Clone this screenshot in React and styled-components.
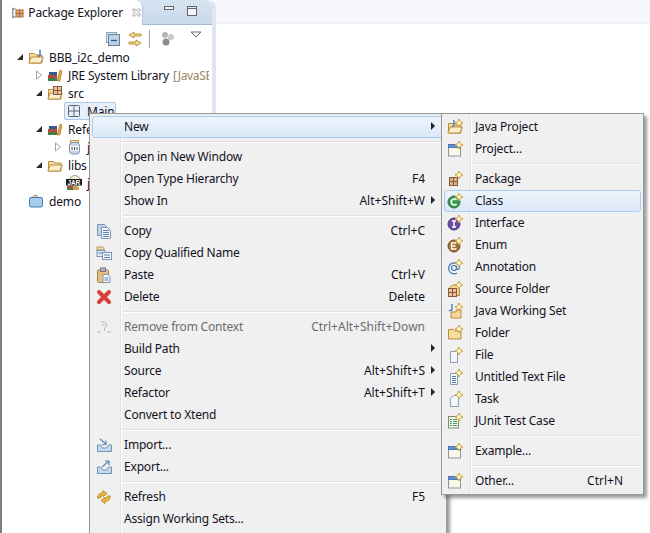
import React from 'react';
import styled, { createGlobalStyle } from 'styled-components';

const Global = createGlobalStyle`
  html, body { margin: 0; padding: 0; background: #fff; }
  body { width: 650px; height: 533px; overflow: hidden; font-family: "Noto Sans", "Liberation Sans", sans-serif; font-size: 12px; color: #12121e; }
  #root { width: 650px; height: 533px; }
  * { box-sizing: border-box; }
`;

const Page = styled.div`
  position: relative; width: 650px; height: 533px; display: flex; background: #fff; overflow: hidden;
`;
const LeftPane = styled.div`
  width: 216px; height: 533px; border-left: 2px solid #7e7e7e; border-right: 4px solid #dfe5f4; display: flex; flex-direction: column; border-top-right-radius: 7px; flex: none;
`;
const RightStrip = styled.div`
  flex: 1; height: 24px; background: #f6f7fb; border-bottom: 1px solid #eef0f5;
`;
const TabBar = styled.div`
  height: 25px; background: linear-gradient(#d6e3f1, #c9daec); display: flex; border-bottom: 1px solid #a7b8d2; border-top-right-radius: 6px; flex: none;
`;
const Tab = styled.div`
  width: 141px; height: 25px; background: #fff; border-right: 1px solid #b7c4d8; border-top-right-radius: 7px; display: flex; align-items: center; padding: 0 0 0 10px; gap: 4px; white-space: nowrap; letter-spacing: -.17px; flex: none;
`;
const TabClose = styled.span` margin-left: 4px; display: flex; `;
const TabTools = styled.div` display: flex; gap: 13px; padding: 6px 0 0 21px; align-items: flex-start; `;
const ViewBar = styled.div`
  height: 23px; display: flex; align-items: center; padding: 4px 0 0 104px; flex: none;
`;
const ToolSlot = styled.span` display: flex; margin-right: ${p => p.$mr}px; margin-top: ${p => p.$mt || 0}px; `;
const Divider = styled.div` width: 1px; height: 18px; background: #9ba3ad; margin-right: 10px; `;
const Tree = styled.div` display: flex; flex-direction: column; margin-right: 3px; overflow: hidden; `;
const Row = styled.div`
  height: 18px; display: flex; align-items: center; padding: 0 0 0 ${p => p.$indent}px; white-space: nowrap; letter-spacing: -.15px; flex: none;
`;
const Twist = styled.span` width: 10px; height: 10px; display: flex; flex: none; margin-right: 3px; `;
const RowIcon = styled.span` width: 16px; height: 16px; display: flex; flex: none; margin-right: 5px; `;
const Muted = styled.span` color: #9a8560; margin-left: 4px; letter-spacing: -.35px; `;
const Selected = styled.span`
  display: inline-flex; align-items: center; height: 18px; width: 52px; margin-left: -2px; padding-left: 1px; background: #e6effb; border: 1px solid #a9c8ea; border-radius: 2px;
`;

const Menu = styled.div`
  position: absolute; background: #f0f0f0; border: 1px solid #979797; box-shadow: 3px 3px 3px rgba(90,90,90,.6); display: flex; flex-direction: column; padding: 2px;
`;
const MainMenu = styled(Menu)` left: 89px; top: 113px; width: 358px; height: 440px; `;
const SubMenu = styled(Menu)` left: 441px; top: 113px; width: 203px; height: 382px; `;
const Gutter = styled.div`
  position: absolute; top: 2px; bottom: 2px; width: 2px; background: #e3e3e3; border-right: 1px solid #fff; left: ${p => p.$left}px;
`;
const Item = styled.div`
  position: relative; height: 22px; display: flex; align-items: center; padding: 0 ${p => p.$right}px 2px ${p => p.$pad}px; flex: none; white-space: nowrap;
  color: ${p => (p.$off ? '#6d6d6d' : '#12121e')};
  border: 1px solid transparent;
  ${p => p.$hot ? 'background: linear-gradient(#eef4fc, #dbe8f8); border-color: #a9cdf2; border-radius: 3px;' : ''}
`;
const Label = styled.span` letter-spacing: -.19px; `;
const Ico = styled.span`
  position: absolute; left: ${p => p.$left}px; top: 2px; width: 16px; height: 16px; display: flex;
`;
const Short = styled.span` margin-left: auto; `;
const Arrow = styled.span`
  position: absolute; right: 8px; top: 5px; width: 0; height: 0; border-left: 4px solid #222; border-top: 4px solid transparent; border-bottom: 4px solid transparent;
`;
const Sep = styled.div`
  height: 2px; margin: 3px 1px 3px ${p => p.$left}px; background: #e0e0e0; border-bottom: 1px solid #fff; flex: none;
`;

const Svg = ({ children }) => (
  <svg width={16} height={16} viewBox="0 0 16 16">{children}</svg>
);

const Star = ({ x = 12, y = 4 }) => (
  <path d={`M${x} ${y - 4}l1.300 2.700 2.700 1.300-2.700 1.300-1.300 2.700-1.300-2.700-2.700-1.300 2.700-1.300z`} fill="#fff6cc" stroke="#c79a2e" strokeWidth=".9" />
);
const Folder = ({ open }) => (
  <>
    <path d="M1.500 4.500h5l1.500 1.500h6v8h-12.500z" fill="#f6dea0" stroke="#b98a3e" />
    {open && <path d="M.8 14l2.500-6h12l-2.500 6z" fill="#fcefc8" stroke="#b98a3e" />}
  </>
);
const Books = () => (
  <Svg>
    <rect x="1" y="11" width="9" height="3" fill="#3f7d4a" />
    <rect x="1" y="8" width="9" height="3" fill="#b8483a" />
    <rect x="2" y="5" width="8" height="3" fill="#345f8c" />
    <path d="M10 14l3-11 2 1-2 10z" fill="#e2a33a" stroke="#a8741f" strokeWidth=".6" />
  </Svg>
);
const Grid3 = ({ c = '#8a5b3a', f = '#e8c29a', x = 3, y = 5 }) => (
  <g stroke={c} strokeWidth="1" fill={f}>
    <rect x={x + .5} y={y + .5} width="4" height="4" /><rect x={x + 4.500} y={y + .5} width="4" height="4" />
    <rect x={x + .5} y={y + 4.500} width="4" height="4" /><rect x={x + 4.500} y={y + 4.500} width="4" height="4" />
  </g>
);
const Doc = ({ lines }) => (
  <>
    <path d="M3.500 4.500h7v11h-7z" fill="#f3f7fc" stroke="#8d9db5" />
    {lines && [7, 9, 11, 13].map(y => <path key={y} d={`M5 ${y + .5}h4`} stroke="#5577aa" />)}
  </>
);
const Win = () => (
  <Svg>
    <rect x="1.500" y="3.500" width="12" height="11.500" fill="#fbf7e6" stroke="#8d96a5" />
    <rect x="1.500" y="3.500" width="12" height="3" fill="#5a8fd0" stroke="#4a78b5" />
    <Star />
  </Svg>
);

const ic = {
  project: <Svg><Folder open /><path d="M12 .500v5q0 2-2.500 1.500" fill="none" stroke="#3a78c4" strokeWidth="1.400" /></Svg>,
  src: <Svg><Folder open /><Grid3 x={6} y={1} /></Svg>,
  libs: <Svg><Folder open /></Svg>,
  demo: <Svg><path d="M5 4l1-1.500h3l1 1.500" fill="#f0dfa8" stroke="#a89658" /><rect x="1.500" y="4.500" width="13" height="9.500" rx="1.500" fill="#a6cdee" stroke="#4a78ac" /></Svg>,
  cls: <Svg><g stroke="#5a6672" strokeWidth="1" fill="none"><rect x="2.500" y="2.500" width="11" height="11" rx="1" /><path d="M8 2.500v11M2.500 8h11" /></g></Svg>,
  jar: <Svg><rect x="4.500" y="1.500" width="8" height="2" fill="#f2dfa0" stroke="#b99a50" /><rect x="3.500" y="3.500" width="10" height="11.500" rx="3" fill="#c9d6e8" stroke="#8095b5" /><rect x="4" y="7" width="9" height="5" fill="#f4f7fb" /><path d="M6 8v3M8.500 8v3M11 8v3" stroke="#555" /></Svg>,
  jarb: <Svg><circle cx="9" cy="6" r="5.500" fill="#f2f2e0" stroke="#998" /><rect x="0" y="4" width="16" height="6.500" fill="#1c1c1c" /><text x="1.500" y="9.600" fontSize="6.500" fontWeight="700" fill="#fff" fontFamily="Liberation Sans, sans-serif">JAR</text><rect x="1" y="11" width="6" height="2" fill="#b8483a" /><rect x="1" y="13" width="6" height="2" fill="#3f7d4a" /><rect x="7" y="12" width="6" height="3" fill="#d2a040" /></Svg>,
  copy: <Svg><path d="M1.500 1.500h7l2 2v9h-9z" fill="#bcd2e8" stroke="#7d96b3" /><path d="M5.500 4.500h6l3 3v8h-9z" fill="#f5f8fc" stroke="#7d96b3" />{[8, 10, 12, 14].map(y => <path key={y} d={`M7 ${y - .5}h6`} stroke="#5a82ae" />)}</Svg>,
  copyq: <Svg><path d="M1 2h6l1 1v2H1z" fill="#f3d9a4" stroke="#b79a60" /><rect x="1" y="5.500" width="8" height="6" fill="#dfe8f3" stroke="#7d96b3" /><rect x="6.500" y="7.500" width="9" height="7" fill="#f5f8fc" stroke="#7d96b3" /><path d="M8 10h6M8 12.500h6M2.500 8h4" stroke="#5a82ae" /></Svg>,
  paste: <Svg><rect x="1.500" y="3" width="11" height="12.500" rx="1" fill="#e7bd82" stroke="#a98345" /><rect x="4.500" y="1" width="5" height="3.500" fill="#aeb6bf" stroke="#71797f" /><path d="M7 7.500h5l2 2v6H7z" fill="#f7f9fc" stroke="#7d96b3" /><path d="M8.500 11h4M8.500 13h4" stroke="#5a82ae" /></Svg>,
  del: <Svg><path d="M3 3l10 10M13 3L3 13" stroke="#d8403c" strokeWidth="4" strokeLinecap="round" /></Svg>,
  ctx: <Svg><path d="M5 3h4l1.500 1.500V7l-2 2v3" fill="none" stroke="#b9b9b9" /><path d="M1 13h4M11 13h4M6 6h3" stroke="#b9b9b9" /></Svg>,
  imp: <Svg><path d="M1.500 8v6.500h14V8h-3l-2 3h-4l-2-3z" fill="#c6d9ec" stroke="#6d93bb" /><path d="M4 2l6 5M10 3.500V7.500H6" fill="none" stroke="#5e88b5" strokeWidth="1.200" /></Svg>,
  exp: <Svg><path d="M1.500 8v6.500h14V8h-3l-2 3h-4l-2-3z" fill="#c6d9ec" stroke="#6d93bb" /><path d="M6 8l7-6M9 2h4v4" fill="none" stroke="#5e88b5" strokeWidth="1.200" /></Svg>,
  refresh: <Svg><path d="M1.500 9q.5-5 5.500-5.500V1.500l4 3-4 3.200V6q-2 .5-2.500 3zM14.500 7q-.5 5-5.500 5.500v2l-4-3 4-3.200V10q2-.5 2.500-3z" fill="#eeb93c" stroke="#b47d1a" strokeWidth=".8" /></Svg>,
  jproject: <Svg><Folder open /><path d="M7 1v5q0 1.500-2 1" fill="none" stroke="#3a78c4" strokeWidth="1.300" /><Star /></Svg>,
  win: <Win />,
  pkg: <Svg><Grid3 x={2} y={6} f="#dcae82" /><Star /></Svg>,
  newClass: <Svg><circle cx="7" cy="9" r="6" fill="#3e9a4f" stroke="#24723a" /><path d="M9.500 7a3 3 0 1 0 0 4" fill="none" stroke="#fff" strokeWidth="1.600" /><Star /></Svg>,
  iface: <Svg><circle cx="7" cy="9" r="6" fill="#6a4fa5" stroke="#4c3580" /><path d="M5 6h4M7 6v6M5 12h4" stroke="#fff" strokeWidth="1.400" /><Star /></Svg>,
  en: <Svg><circle cx="7" cy="9" r="6" fill="#a36c32" stroke="#7b4e20" /><path d="M9.500 6h-5v6h5M4.500 9h4" fill="none" stroke="#fff" strokeWidth="1.300" /><Star /></Svg>,
  anno: <Svg><circle cx="7" cy="9" r="2.500" fill="none" stroke="#3f78b8" strokeWidth="1.200" /><path d="M9.500 7v3q2.500 1.500 3-1.500A5.500 5.500 0 1 0 10 14" fill="none" stroke="#3f78b8" strokeWidth="1.200" /><Star /></Svg>,
  srcf: <Svg><path d="M2.500 7l3-3h5l2 3v7.500h-10z" fill="#f4d796" stroke="#b98a3e" /><Grid3 x={1} y={7} /><Star /></Svg>,
  workset: <Svg><path d="M5 1v5q0 2-3 1.500" fill="none" stroke="#3a78c4" strokeWidth="1.300" /><path d="M4 9h5V7h5v8H4z" fill="#f5d79a" stroke="#b98a3e" /><Star /></Svg>,
  folder: <Svg><Folder /><Star /></Svg>,
  file: <Svg><Doc /><Star /></Svg>,
  text: <Svg><Doc lines /><Star /></Svg>,
  task: <Svg><path d="M3.500 7.500l3-3h5v11h-8z" fill="#f3f7fc" stroke="#8d9db5" /><Star /></Svg>,
  junit: <Svg><rect x="1.500" y="3.500" width="10" height="11.500" fill="#f4f8f0" stroke="#7d8f6a" />{[6, 8, 10, 12].map(y => <path key={y} d={`M3 ${y + .5}h2M6 ${y + .5}h4`} stroke="#3f9a55" />)}<Star /></Svg>,
};

const Tw = ({ open }) => (
  <Twist>
    <svg width="10" height="10" viewBox="0 0 10 10">
      {open ? <path d="M8 2v6H2z" fill="#2c2c2c" /> : <path d="M2.500 1l5 4-5 4z" fill="#fff" stroke="#9aa3ad" />}
    </svg>
  </Twist>
);

const mainItems = [
  { label: 'New', hot: true, arrow: true },
  { sep: true },
  { label: 'Open in New Window' },
  { label: 'Open Type Hierarchy', short: 'F4' },
  { label: 'Show In', short: 'Alt+Shift+W', arrow: true },
  { sep: true },
  { label: 'Copy', short: 'Ctrl+C', icon: 'copy' },
  { label: 'Copy Qualified Name', icon: 'copyq' },
  { label: 'Paste', short: 'Ctrl+V', icon: 'paste' },
  { label: 'Delete', short: 'Delete', icon: 'del' },
  { sep: true },
  { label: 'Remove from Context', short: 'Ctrl+Alt+Shift+Down', icon: 'ctx', off: true },
  { label: 'Build Path', arrow: true },
  { label: 'Source', short: 'Alt+Shift+S', arrow: true },
  { label: 'Refactor', short: 'Alt+Shift+T', arrow: true },
  { label: 'Convert to Xtend' },
  { sep: true },
  { label: 'Import...', icon: 'imp' },
  { label: 'Export...', icon: 'exp' },
  { sep: true },
  { label: 'Refresh', short: 'F5', icon: 'refresh' },
  { label: 'Assign Working Sets...' },
];
const subItems = [
  { label: 'Java Project', icon: 'jproject' },
  { label: 'Project...', icon: 'win' },
  { sep: true },
  { label: 'Package', icon: 'pkg' },
  { label: 'Class', icon: 'newClass', hot: true },
  { label: 'Interface', icon: 'iface' },
  { label: 'Enum', icon: 'en' },
  { label: 'Annotation', icon: 'anno' },
  { label: 'Source Folder', icon: 'srcf' },
  { label: 'Java Working Set', icon: 'workset' },
  { label: 'Folder', icon: 'folder' },
  { label: 'File', icon: 'file' },
  { label: 'Untitled Text File', icon: 'text' },
  { label: 'Task', icon: 'task' },
  { label: 'JUnit Test Case', icon: 'junit' },
  { sep: true },
  { label: 'Example...', icon: 'win' },
  { sep: true },
  { label: 'Other...', short: 'Ctrl+N', icon: 'win' },
];

const MenuList = ({ items, pad, right, icoLeft, sepLeft }) => items.map((it, i) =>
  it.sep ? <Sep key={i} $left={sepLeft} /> : (
    <Item key={i} $pad={pad} $right={right} $hot={it.hot} $off={it.off}>
      {it.icon && <Ico $left={icoLeft}>{ic[it.icon]}</Ico>}
      <Label>{it.label}</Label>
      {it.short && <Short>{it.short}</Short>}
      {it.arrow && <Arrow />}
    </Item>
  )
);

export default function App() {
  return (
    <Page>
      <Global />
      <LeftPane>
        <TabBar>
          <Tab>
            <svg width="14" height="14" viewBox="0 0 14 14"><path d="M1 1v12M1 2.500h3M1 11.500h3" stroke="#555" fill="none" /><Grid3 x={4} y={3} c="#a5673a" f="#e0a070" /></svg>
            Package Explorer
            <TabClose><svg width="11" height="11" viewBox="0 0 11 11"><path d="M1.500 3l1.500-1.500 2.500 2.500 2.500-2.500L9.500 3 7 5.500l2.500 2.500-1.500 1.500L5.500 7 3 9.500 1.500 8 4 5.500z" fill="#fff" stroke="#9a9a9a" /></svg></TabClose>
          </Tab>
          <TabTools>
            <svg width="10" height="6" viewBox="0 0 10 6"><rect x=".5" y=".5" width="9" height="3" fill="#f2f5f9" stroke="#666" /></svg>
            <svg width="10" height="10" viewBox="0 0 10 10"><rect x=".5" y=".5" width="9" height="9" fill="#f2f5f9" stroke="#666" /><path d="M.5 2.500h9" stroke="#666" /></svg>
          </TabTools>
        </TabBar>
        <ViewBar>
          <ToolSlot $mr={7}><svg width="14" height="14" viewBox="0 0 14 14"><rect x=".5" y=".5" width="10" height="10" fill="#dde6f0" stroke="#8aa" /><rect x="2.500" y="2.500" width="11" height="11" fill="#bcd0e6" stroke="#68829f" /><path d="M5 8.500h6" stroke="#2d5b93" strokeWidth="1.300" /></svg></ToolSlot>
          <ToolSlot $mr={6}><svg width="16" height="16" viewBox="0 0 16 16"><path d="M7 1L2 4l5 3V5h7V3H7zM9 9l5 3-5 3v-2H2v-2h7z" fill="#f5dd9b" stroke="#b78a2c" strokeWidth=".9" /></svg></ToolSlot>
          <Divider />
          <ToolSlot $mr={15}><svg width="15" height="15" viewBox="0 0 15 15"><circle cx="5" cy="4" r="3" fill="#b5b5b5" /><circle cx="11" cy="6" r="3" fill="#c9c9c9" /><circle cx="6" cy="11" r="3.500" fill="#8c8c8c" /></svg></ToolSlot>
          <ToolSlot $mr={0} $mt={-9}><svg width="12" height="7" viewBox="0 0 12 7"><path d="M1 1h10L6 6z" fill="#fff" stroke="#6a6a6a" /></svg></ToolSlot>
        </ViewBar>
        <Tree>
          <Row $indent={13}><Tw open /><RowIcon>{ic.project}</RowIcon>BBB_i2c_demo</Row>
          <Row $indent={32}><Tw /><RowIcon><Books /></RowIcon>JRE System Library<Muted>[JavaSE-1.7]</Muted></Row>
          <Row $indent={32}><Tw open /><RowIcon>{ic.src}</RowIcon>src</Row>
          <Row $indent={64}><Selected><RowIcon>{ic.cls}</RowIcon>Main</Selected></Row>
          <Row $indent={32}><Tw open /><RowIcon><Books /></RowIcon>Referenced Libraries</Row>
          <Row $indent={51}><Tw /><RowIcon>{ic.jar}</RowIcon>jar</Row>
          <Row $indent={32}><Tw open /><RowIcon>{ic.libs}</RowIcon>libs</Row>
          <Row $indent={64}><RowIcon>{ic.jarb}</RowIcon>jar</Row>
          <Row $indent={26}><RowIcon>{ic.demo}</RowIcon>demo</Row>
        </Tree>
      </LeftPane>
      <RightStrip />
      <MainMenu>
        <Gutter $left={30} />
        <MenuList items={mainItems} pad={31} right={18} icoLeft={3} sepLeft={31} />
      </MainMenu>
      <SubMenu>
        <Gutter $left={28} />
        <MenuList items={subItems} pad={30} right={17} icoLeft={2} sepLeft={29} />
      </SubMenu>
    </Page>
  );
}
